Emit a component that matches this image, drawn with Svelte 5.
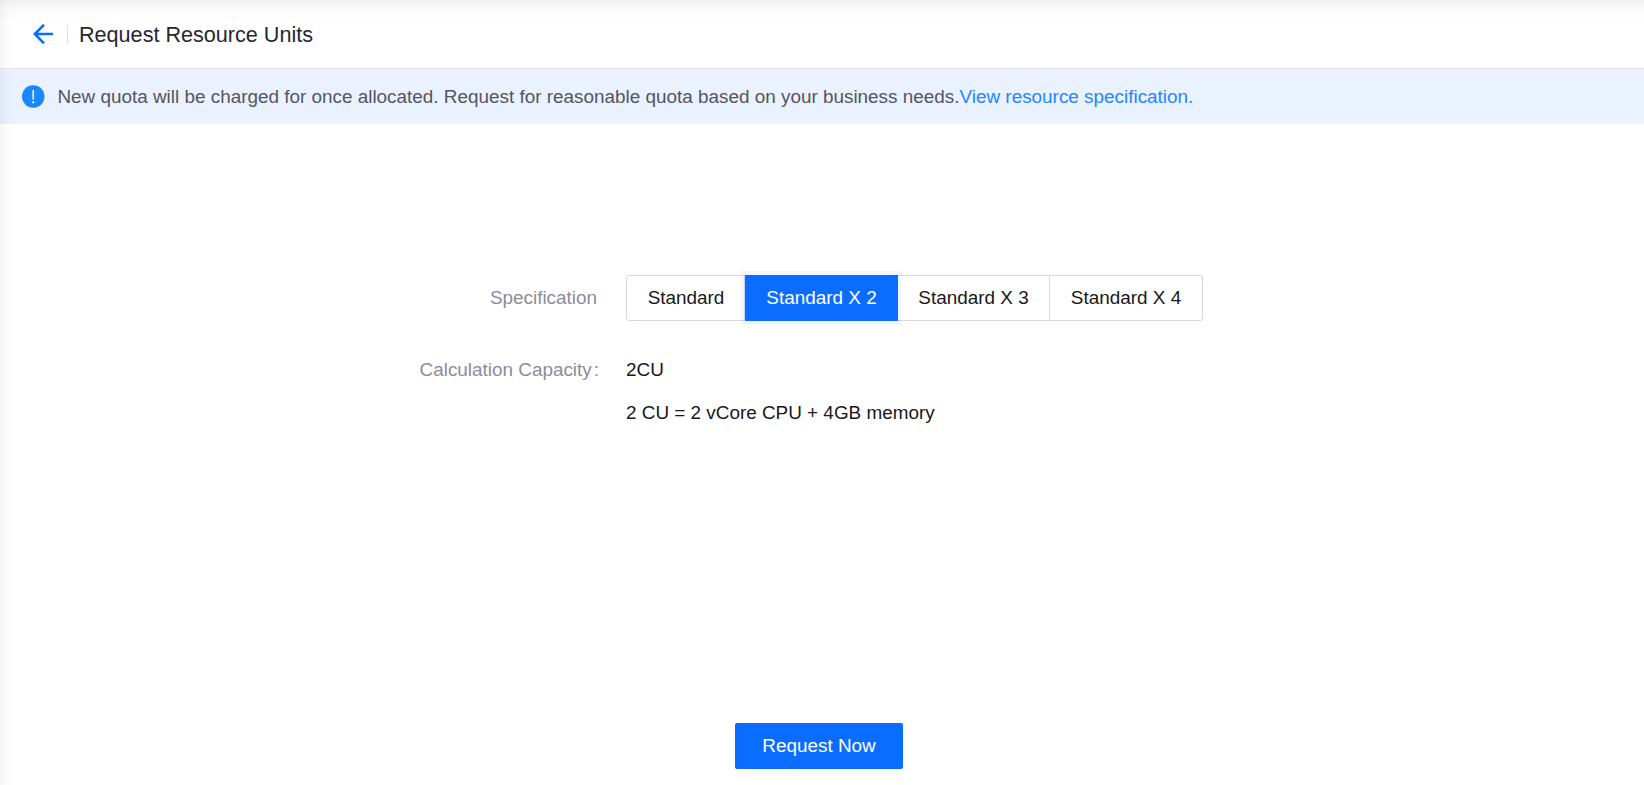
<script>
  const specs = [
    { label: 'Standard', width: 119 },
    { label: 'Standard X 2', width: 153 },
    { label: 'Standard X 3', width: 152 },
    { label: 'Standard X 4', width: 153 }
  ];
  let selected = $state(1);
</script>

<div class="page">
  <header>
    <svg class="back" width="21" height="21" viewBox="0 0 21 21" fill="none" stroke="#0b6dff" stroke-width="2.6">
      <path d="M11 .8 1.8 10l9.2 9.3M2 10h18" />
    </svg>
    <span class="divider"></span>
    <h1>Request Resource Units</h1>
  </header>

  <div class="banner">
    <svg class="info" width="23" height="23" viewBox="0 0 23 23">
      <circle cx="11.2" cy="11.5" r="11.3" fill="#1a88ff" />
      <path d="M10.4 5h1.6v9.6h-1.6zM10.2 16.2h2v2h-2z" fill="#e8f2ff" />
    </svg>
    <p>New quota will be charged for once allocated. Request for reasonable quota based on your business needs.<a href="#spec">View resource specification.</a></p>
  </div>

  <main>
    <div class="row spec">
      <span class="label">Specification</span>
      <div class="group">
        {#each specs as spec, i}
          <button class:active={selected === i} style="width: {spec.width}px" onclick={() => (selected = i)}>{spec.label}</button>
        {/each}
      </div>
    </div>
    <div class="row capacity">
      <span class="label">Calculation Capacity<span class="colon">:</span></span>
      <div class="values">
        <div>2CU</div>
        <div>2 CU = 2 vCore CPU + 4GB memory</div>
      </div>
    </div>
  </main>

  <footer><button class="submit">Request Now</button></footer>
  <div class="shade"></div>
</div>

<style>
  :global(body) { margin: 0; background: #fff; }
  .page {
    position: relative;
    box-sizing: border-box;
    width: 100%;
    height: 785px;
    overflow: hidden;
    display: flex;
    flex-direction: column;
    font: 18.9px/22px "Liberation Sans", Arial, sans-serif;
    color: #181818;
  }
  .shade {
    position: absolute;
    inset: 0;
    pointer-events: none;
    background:
      linear-gradient(to bottom, rgba(0, 0, 0, 0.06), rgba(0, 0, 0, 0.02) 9px, transparent 20px),
      linear-gradient(to right, rgba(0, 0, 0, 0.035), rgba(0, 0, 0, 0.01) 8px, transparent 17px);
  }
  header {
    box-sizing: border-box;
    height: 69px;
    padding: 0 0 0 33px;
    border-bottom: 1px solid #e2e5ea;
    display: flex;
    align-items: center;
  }
  .divider { width: 1px; height: 19px; margin: 0 11px 0 13px; background: #dfdfe3; }
  h1 { margin: 1px 0 0; font-size: 21.6px; line-height: 26px; font-weight: 400; color: #272733; white-space: nowrap; }
  .banner {
    box-sizing: border-box;
    height: 55px;
    padding: 0 22px 1px;
    background: #eaf1ff;
    display: flex;
    align-items: center;
  }
  .banner p { margin: 2px 0 0 12.4px; color: #555560; white-space: nowrap; }
  a { color: #2288ff; text-decoration: none; }
  main { flex: 1; padding-top: 151px; }
  .row { display: flex; }
  .label { width: 597px; margin-right: 29px; text-align: right; color: #8c8c9b; white-space: nowrap; }
  .spec { align-items: center; }
  .capacity { margin-top: 38px; }
  .capacity .label { width: 599px; margin-right: 27px; }
  .colon { margin-left: 2px; }
  .group { display: flex; }
  button { font: inherit; padding: 0; cursor: pointer; white-space: nowrap; }
  .group button {
    box-sizing: border-box;
    height: 46px;
    border: solid #d8d8e2;
    border-width: 1px 1px 1px 0;
    background: #fff;
    color: #181818;
  }
  .group button:first-child { padding-left: 1px; border-left-width: 1px; border-radius: 3px 0 0 3px; }
  .group button:last-child { border-radius: 0 3px 3px 0; }
  .group button.active {
    position: relative;
    padding-left: 1px;
    border-color: #0b6dff;
    background: #0b6dff;
    color: #fff;
    box-shadow: 0 0 0 4px rgba(11, 109, 255, 0.06);
  }
  .values { display: flex; flex-direction: column; gap: 21px; }
  footer { display: flex; padding: 0 0 16px 735px; }
  .submit { width: 168px; height: 46px; border: 0; border-radius: 2px; background: #0b6dff; color: #fff; }
</style>
